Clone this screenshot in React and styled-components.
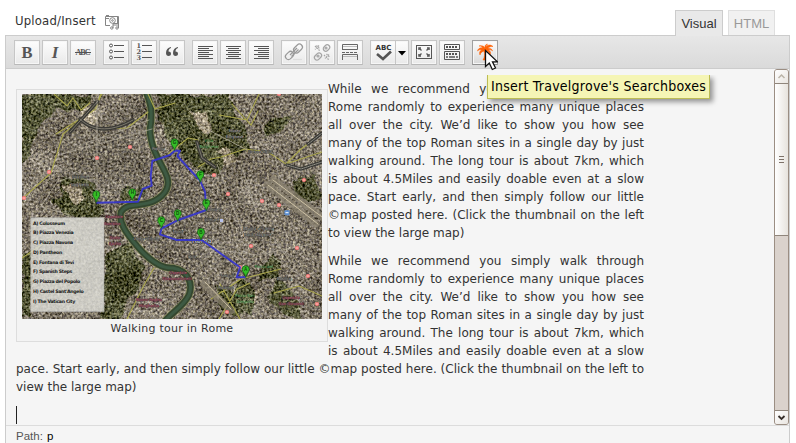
import React from "react";
import styled, { createGlobalStyle } from "styled-components";

const Global = createGlobalStyle`
  * { box-sizing: border-box; }
  html, body { margin: 0; padding: 0; overflow: hidden; background: #fff; }
`;

const Page = styled.main`
  position: relative;
  width: 796px;
  height: 443px;
  overflow: hidden;
  padding: 10px 6px 0 5px;
  display: flex;
  flex-direction: column;
  color: #333;
  font-family: "DejaVu Sans", sans-serif;
`;

const Header = styled.header`
  display: flex;
  height: 25px;
  padding: 0 15px 0 10px;
`;

const UploadLabel = styled.div`
  display: flex;
  flex: 1;
  height: 21px;
  align-items: center;
  gap: 8px;
  font-family: "DejaVu Sans Condensed", "DejaVu Sans", sans-serif;
  font-stretch: condensed;
  font-size: 13px;
  letter-spacing: 0.18px;
`;

const MediaIcon = styled.svg`
  width: 16px;
  height: 16px;
  margin-top: 2px;
`;

const Tab = styled.div`
  z-index: 1;
  width: ${(p) => (p.$active ? 48 : 47)}px;
  height: ${(p) => (p.$active ? 26 : 25)}px;
  margin-left: ${(p) => (p.$active ? 0 : 5)}px;
  border: 1px solid ${(p) => (p.$active ? "#ccc" : "#dfdfdf")};
  border-bottom: 0;
  background: ${(p) => (p.$active ? "#e9e9e9" : "#f1f1f1")};
  color: ${(p) => (p.$active ? "#333" : "#999")};
  font: 13px/25px "Liberation Sans", sans-serif;
  text-align: center;
`;

const Editor = styled.section`
  display: flex;
  flex-direction: column;
  height: 408px;
  border: 1px solid #ccc;
  border-bottom: 0;
  background: #f5f5f5;
`;

const Toolbar = styled.div`
  display: flex;
  gap: 7px;
  height: 33px;
  flex: none;
  padding: 4px 8px;
  border-bottom: 1px solid #ccc;
  background: linear-gradient(#e7e7e7, #dadada);
`;

const Group = styled.div`
  display: flex;
  gap: 2px;
`;

const ToolButton = styled.button`
  display: flex;
  width: ${(p) => p.$width || 26}px;
  height: 25px;
  padding: 0;
  border: 1px solid ${(p) => (p.$hover ? "#a0a0a0" : "#c6c6c6")};
  border-bottom-color: ${(p) => (p.$hover ? "#909090" : "#b9b9b9")};
  background: linear-gradient(#fdfdfd, ${(p) => (p.$hover ? "#d8d8d8" : "#e9e9e9")});
  box-shadow: inset 0 0 0 1px #f6f6f6;
`;

const Glyph = styled.svg`
  width: ${(p) => p.$width || 24}px;
  height: 23px;
  display: block;
  color: #555;
`;

const Workspace = styled.div`
  display: flex;
  height: 356px;
  flex: none;
`;

const Content = styled.article`
  flex: 1;
  padding: 11px 130px 0 10px;
  font-size: 12px;
  line-height: 18px;
  text-align: justify;
`;

const Paragraph = styled.p`
  margin: 0 0 10px;
`;

const Figure = styled.figure`
  float: left;
  width: 312px;
  height: 253px;
  margin: 9px 0 10px;
  padding: 4px 5px 0;
  border: 1px solid #ddd;
  background: #f3f3f3;
`;

const MapArt = styled.svg`
  display: block;
  width: 300px;
  height: 225px;
`;

const Caption = styled.figcaption`
  font-size: 11px;
  line-height: 20px;
  text-align: center;
  letter-spacing: 0.25px;
`;

const Caret = styled.div`
  width: 1px;
  height: 18px;
  background: #222;
`;

const Scrollbar = styled.div`
  display: flex;
  flex-direction: column;
  width: 15px;
  border: 1px solid #9b8e83;
  border-radius: 3px;
  background: #dad2cc;
`;

const ScrollButton = styled.div`
  display: grid;
  place-items: center;
  width: 13px;
  height: ${(p) => (p.$dim ? 13 : 14)}px;
  border-radius: ${(p) => (p.$dim ? "2px 2px 0 0" : "0 0 2px 2px")};
  background: linear-gradient(135deg, #fff, #e9e5e0);
  color: ${(p) => (p.$dim ? "#bbb4a8" : "#38302b")};
  border-top: ${(p) => (p.$dim ? 0 : 1)}px solid #8f857b;
  svg { width: 9px; height: 7px; }
`;

const Thumb = styled.div`
  display: flex;
  flex-direction: column;
  align-items: center;
  justify-content: center;
  gap: 2px;
  height: 153px;
  border: solid #8f857b;
  border-width: 1px 0;
  background: linear-gradient(90deg, #fff, #e7e3dd);
`;

const Grip = styled.i`
  width: 5px;
  height: 1px;
  background: #7d7168;
`;

const TrackSpace = styled.div`
  flex: 1;
`;

const Status = styled.footer`
  flex: 1;
  border-top: 1px solid #dcdcdc;
  padding-left: 10px;
  font: 11.5px/21px "Liberation Sans", sans-serif;
  color: #555;
  b { margin-left: 1px; font-weight: normal; color: #000; }
`;

const Tooltip = styled.div`
  position: absolute;
  left: 487px;
  top: 75px;
  width: 223px;
  height: 24px;
  padding-left: 3px;
  border: 1px solid #bcbc55;
  border-top: 0;
  background: #f5f5b5;
  color: #000;
  box-shadow: 3px 3px 5px rgba(0, 0, 0, 0.4);
  clip-path: inset(0 -10px -10px -10px);
  font: 14px/22px "DejaVu Sans Condensed", "DejaVu Sans", sans-serif;
  font-stretch: condensed;
  letter-spacing: 0.25px;
  white-space: nowrap;
`;

const Pointer = styled.svg`
  position: absolute;
  left: 484px;
  top: 49px;
  width: 14px;
  height: 22px;
`;

const hlines = (rows) =>
  rows.map(([x, w, y]) => <rect key={y} x={x} y={y} width={w} height="1" />);

const alignRows = (kind) =>
  [15, 11, 15, 11, 15, 11, 15].map((w, i) => [
    kind === "left" ? 5 : kind === "right" ? 20 - w : 12.5 - w / 2,
    w,
    5 + i * 2,
  ]);

const icons = {
  bold: <text x="12" y="17" textAnchor="middle" fontFamily="Liberation Serif, serif" fontWeight="700" fontSize="16.5" fill="currentColor">B</text>,
  italic: <text x="12" y="17" textAnchor="middle" fontFamily="Liberation Serif, serif" fontWeight="700" fontStyle="italic" fontSize="17" fill="currentColor">I</text>,
  strike: (
    <g fill="currentColor">
      <text x="12" y="14" textAnchor="middle" fontFamily="Liberation Serif, serif" fontWeight="700" fontSize="8" textLength="15">ABC</text>
      <rect x="4" y="11" width="16" height="1" />
    </g>
  ),
  bullets: (
    <g stroke="currentColor" fill="none">
      {[4.5, 10.5, 16.5].map((y) => (
        <g key={y}><circle cx="7" cy={y} r="1.5" /><path d={`M10 ${y}h10`} /></g>
      ))}
    </g>
  ),
  numbers: (
    <g fill="currentColor" fontFamily="DejaVu Serif, serif" fontWeight="700" fontSize="6.5">
      {[1, 2, 3].map((n, i) => (
        <g key={n}><text x="4.5" y={7 + i * 6}>{n}</text><rect x="10" y={4 + i * 6} width="10" height="1" /></g>
      ))}
    </g>
  ),
  quote: (
    <g fill="currentColor">
      <path d="M11 6C7.800 6.500 6 9 6 12c0 2 1 3 2.500 3S11 14 11 12.700 10 10.500 8.500 10.500c0-2 1-3 2.500-3.500z" />
      <path d="M18 6c-3.200.5-5 3-5 6 0 2 1 3 2.500 3S18 14 18 12.700s-1-2.200-2.500-2.200c0-2 1-3 2.500-3.500z" />
    </g>
  ),
  left: <g fill="currentColor">{hlines(alignRows("left"))}</g>,
  center: <g fill="currentColor">{hlines(alignRows("center"))}</g>,
  right: <g fill="currentColor">{hlines(alignRows("right"))}</g>,
  link: (
    <g fill="none" stroke="#999" strokeWidth="1.2">
      <rect x="3" y="11.500" width="9" height="6" rx="3" transform="rotate(-45 7.500 14.500)" />
      <rect x="11" y="4.500" width="10" height="6" rx="3" transform="rotate(-45 16 7.500)" />
      <path d="m8 14 7-7M9.500 15.500l7-7" strokeWidth="1.300" />
      <path d="M11 18.500h9" stroke="#ddd" />
    </g>
  ),
  unlink: (
    <g fill="none" stroke="#a5a5a5" strokeWidth="1.2">
      <rect x="13" y="4.500" width="7" height="5" rx="2.500" transform="rotate(-45 16.500 7)" />
      <rect x="4" y="13" width="8" height="5" rx="2.500" transform="rotate(-45 8 15.500)" />
      <circle cx="16" cy="7" r="1" /><circle cx="8" cy="15" r="1" />
      <path d="m5 5 5 5M9 4.500l-4 4M6.500 4.500l3 3M14 14l5 5M19 13.500l-4 4M16.500 13l3 3" strokeDasharray="1.500 1" />
    </g>
  ),
  more: (
    <g fill="none" stroke="#666">
      <path d="M4.500 9V3.500h15V8.500h-15M4.500 19v-5.500h15V19" />
      <path d="M5 5.500h14M5 15.500h14" stroke="#bbb" />
      <path d="M4 11.500h16" strokeDasharray="3 1" strokeWidth="1" />
    </g>
  ),
  spell: (
    <g fill="none" stroke="currentColor">
      <text x="4.500" y="9" stroke="none" fill="#333" fontFamily="DejaVu Sans, sans-serif" fontWeight="700" fontSize="7" textLength="16">ABC</text>
      <path d="m6 13 6 5 8-7.500" strokeWidth="2.600" />
      <path d="M24.500 0v23" stroke="#c6c6c6" />
      <path d="M27 10h8l-4 4.500z" fill="#000" stroke="none" />
    </g>
  ),
  fullscreen: (
    <g fill="none" stroke="#555">
      <rect x="4.500" y="4.500" width="15" height="13" />
      <path d="M7 9V7h2M15 7h2v2M17 13v2h-2M9 15H7v-2" strokeWidth="1.500" />
      <path d="m7.500 7.500 2 2M16.500 7.500l-2 2M16.500 14.500l-2-2M7.500 14.500l2-2" strokeWidth="1.300" />
    </g>
  ),
  keyboard: (
    <g fill="none" stroke="#555">
      <path d="M4.500 3.500h15v5h-15zM4.500 10.500h15v8h-15z" />
      <path d="M6 6h12M6 13h12" strokeWidth="2" strokeDasharray="2 1" />
      <path d="M6 16h12" strokeWidth="1.700" strokeDasharray="2 1 6 1" />
    </g>
  ),
  palm: (
    <path fill="#ff6408" stroke="#ff6408" strokeWidth=".5" d="M12 7c-1-2-3-2.800-6-2 3 0 3 1 3.500 2C7 6.200 5 7.800 4.500 10 6 8.500 7 8.500 8.500 9 6.500 10 6 12 7 14c.5-2 2-3.300 4-4 .8 3 .7 6-1 9h4c-1-3-.8-6-.5-9 2 .5 3 2 3.500 4 1.300-2 .5-4-1.500-5 2-.5 3 0 4 1-.3-2-2.400-3-4.500-2.700C16 5.500 18 5.500 20 5.500 17 3 14 4 12.700 6.300c.2-1.300.8-2.300 1.800-3.300C12.500 3.300 11.600 5 12 7z" />
  ),
};

const groups = [
  ["bold", "italic", "strike"],
  ["bullets", "numbers", "quote"],
  ["left", "center", "right"],
  ["link", "unlink", "more"],
  ["spell", "fullscreen", "keyboard"],
  ["palm"],
];

const pins = [
  ["G", 152.500, 48.500], ["I", 74.300, 100.300], ["H", 110.300, 98.500],
  ["F", 178.300, 80.300], ["E", 184.300, 108.700], ["D", 155.700, 119.300],
  ["C", 139.300, 126.300], ["B", 179, 138], ["A", 223.700, 175.300],
];

const stops = [
  "A) Colosseum", "B) Piazza Venezia", "C) Piazza Navona", "D) Pantheon",
  "E) Fontana di Tevi", "F) Spanish Steps", "G) Piazza del Popolo",
  "H) Castel Sant'Angelo", "I) The Vatican City",
];

const stations = [
  [108, 53], [75, 64], [27, 78], [2, 104], [192, 81], [206, 100], [240, 107],
  [257, 111], [282, 86], [229, 152], [275, 154], [286, 182], [295, 210],
  [205, 218], [218, 173], [257, 0],
];

const river =
  "M124-2C128 8 131 16 128 35C128 52 137 66 143 78C150 91 144 101 132 107C120 113 105 108 99 118C96 130 107 142 115 152C127 166 139 175 151 174C167 177 171 190 167 201C161 213 151 217 143 227";

const greens = [
  "M0 0h36l-2 16-12 9-8 12-8 30-8 6z",
  "M35 0h32l-3 18-13-4-8 7-8-6z",
  "M40 85l20-2 12 8-2 14 12 10-8 9-24-2-22-13 10-6z",
  "M103 90l7 5 8-3 3 9-5 9-12-2-6-8z",
  "M150 0h55l8 24 11 7 4 23-17 11-12 14-20-1-17-15-20-24-7-24z",
  "M133 0h28l4 9-14 12-14-10z",
  "M244 28l24-4-6 12-18 5z",
  "M272 87l20-7 8 23-12 9-14-9z",
  "M212 188l12-3 12 16-7 18-17-8z",
  "M240 170l13-11 9 8-8 17-17 4z",
  "M84 160l23-9 17 24-9 22-19 28H79z",
  "M0 162l10-4-2 67H0z",
  "M252 186l21 14 8 25-21-4-13-18z",
  "M194 191l18 10 7 15-8 8-14-14z",
];

function RomeMap() {
  return (
    <MapArt viewBox="0 0 300 225" role="img" aria-label="Map of Rome">
      <defs>
        <filter id="terrain" x="0" y="0" width="100%" height="100%" colorInterpolationFilters="sRGB">
          <feTurbulence type="fractalNoise" baseFrequency="0.06" numOctaves="3" seed="8" result="warp" />
          <feDisplacementMap in="SourceGraphic" in2="warp" scale="13" xChannelSelector="R" yChannelSelector="G" result="land" />
          <feTurbulence type="fractalNoise" baseFrequency="0.42" numOctaves="2" seed="4" />
          <feColorMatrix values="1.6 .5 0 0 -.55  1.550 .55 .02 0 -.56  1.400 .5 .25 0 -.575  0 0 0 0 1" result="grain" />
          <feComposite in="land" in2="grain" operator="arithmetic" k2="1" k3=".62" k4="-.31" result="detail" />
          <feTurbulence type="fractalNoise" baseFrequency="0.035" numOctaves="3" seed="15" />
          <feColorMatrix values=".7 .5 0 0 -.1  .7 .5 0 0 -.1  .7 .5 0 0 -.1  0 0 0 0 1" result="patches" />
          <feComposite in="detail" in2="patches" operator="arithmetic" k2="1" k3=".3" k4="-.15" />
        </filter>
        <pattern id="blocks" width="8" height="7" patternUnits="userSpaceOnUse" patternTransform="rotate(24)">
          <path d="M0 0h8M0 0v7M3 0v3h5" fill="none" stroke="#4a4b44" strokeWidth=".8" />
        </pattern>
        <pattern id="avenues" width="10" height="8" patternUnits="userSpaceOnUse" patternTransform="rotate(-38)">
          <path d="M0 0h10M0 0v8" fill="none" stroke="#aaa399" strokeWidth=".8" />
        </pattern>
      </defs>
      <g filter="url(#terrain)">
        <path d="M-10-10h320v245h-320z" fill="#7b7365" />
        {greens.map((d) => <path key={d} d={d} fill="#4d4f31" />)}
        <path d="M62 10l13 6-2 14-9 5-7-12zM40 91l18-2 7 14-12 8zM166 16l19 3 5 18-11 2zM196 56l12-3 9 13-13 7zM233 195l7 5-8 11z" fill="#a0957f" />
      </g>
      <path fill="url(#blocks)" opacity=".45" d="M32 38l90-30 5 100-88-20zM110 116l30-12 10-26 35 30 30 70-45-5-40-20z" />
      <path fill="url(#avenues)" opacity=".32" d="M190 100l40-90h70v215h-70l-50-70zM0 55l34-30-3 60-31 35z" />
      <g fill="none" strokeLinecap="round">
        <path d={river} stroke="#8f905f" strokeWidth="7.6" />
        <path d={river} stroke="#34462f" strokeWidth="6.500" />
        <path d={river} stroke="#3e5a43" strokeWidth="3" />
        <path d="M34 40l40-25 5-17M0 105l29-26 12-39 32-27 7-13M32 0l13 12 6-8 8 12 9-7M75 35l30-1 21-16M126 0l7 15 20-6M146 60l20-16 10 2M176 73l13-8 10-2 24-8 23 3 18 12 36-12M264 70l14-14 22-17M197 21l28 5 12-26M210 10l19 21 7-14M105 225l17-34 10-17M189 205l30-20 40-10M197 225l18-30 13-6M252 199l25-7 23 10M198 190l20 35M0 164l30-20" stroke="#aaa74c" strokeWidth="1.100" />
        <path d="M58 25c14 14 34 12 53 1M48 38l28-31M175 48l5 16 13 9" stroke="#3b3a36" strokeWidth="3.6" strokeDasharray="6 1" />
        <path d="M58 25c14 14 34 12 53 1M48 38l28-31M175 48l5 16 13 9" stroke="#8c8878" strokeWidth=".8" />
        <path d="M75 0v105M63 49l25-8 39-15M40 60l90-25M20 111l15-23 11-4 28 2M48 121l-31-9M219 70l17 53 33 46M175 30l52 27M224 0l29 60 7 48M185 117l36-8 79 5M195 70l28 75 58 38M180 154l55 7 60-12" stroke="#bbb6a6" strokeWidth="1" opacity=".65" />
        <path d="M245 90l49 40M251 85l49 38M182 190l27 27" stroke="#8b8371" strokeWidth="7" opacity=".75" />
        <path d="M246 91l50 39M251 86l49 37M183 188l26 27" stroke="#ccc0a3" strokeWidth="1" />
        <path d="M265 71l14 4 21-7M286 50l14-11" stroke="#393936" strokeWidth="3.2" />
        <path d="M265 71l14 4 21-7M286 50l14-11" stroke="#bab8a9" strokeWidth=".7" strokeDasharray="1 1" />
      </g>
      <g fontFamily="DejaVu Sans, sans-serif" fontSize="3.700" textAnchor="middle" stroke="#3a3936" strokeWidth=".8" paintOrder="stroke" fill="#aaa9a1">
        <text x="213" y="38">Museo</text><text x="213" y="43.500">Borghese</text>
        <text x="238" y="59">Corso d'Italia</text>
        <text x="58" y="84">Stazione</text><text x="58" y="92">San Pietro</text>
        <text x="236" y="136">Basilica di Santa</text><text x="236" y="141.500">Maria Maggiore</text>
        <text x="157" y="139">Monte</text><text x="193" y="117">Fontana</text>
        <text x="190" y="127">Quirinale</text><text x="205" y="183">Foro di</text>
        <text x="204" y="195">Palatino</text><text x="262" y="186">Basilica</text>
        <text x="170" y="164">Isola</text><text x="136" y="56">Popolo</text>
        <text x="124" y="146">Corso Vittorio</text>
      </g>
      <g fontFamily="DejaVu Sans, sans-serif" fontSize="3.700" textAnchor="middle" stroke="#4b2931" strokeWidth=".7" paintOrder="stroke" fill="#b76e7d">
        <text x="92" y="124">Ospedale</text><text x="90" y="131">Bambino</text>
        <text x="93" y="145">Santo</text><text x="93" y="151">Spirito</text>
        <text x="156" y="180">Ospedale</text><text x="155" y="186">Fatebenefratelli</text>
        <text x="127" y="207">Nuovo Regina</text><text x="127" y="213">Margherita</text>
        <text x="269" y="205">Ospedale</text><text x="269" y="211">San Giovanni</text>
      </g>
      <g fontFamily="DejaVu Sans, sans-serif" fontSize="4" textAnchor="middle" fill="#55aa66">
        <text x="187" y="48">Villa</text><text x="187" y="54">Borghese</text>
        <text x="242" y="174">Parco del</text><text x="223" y="203">Parco San</text><text x="223" y="209">Gregorio</text>
      </g>
      {stations.map(([x, y]) => (
        <g key={`${x}-${y}`}><circle cx={x} cy={y} r="2.1" fill="#f47573" /><path d={`M${x - 1.300} ${y}h2.600`} stroke="#ffe3dc" strokeWidth=".8" /></g>
      ))}
      <rect x="262.500" y="116.200" width="5" height="5" rx="1" fill="#5b8fd2" /><path d="M263.500 118.700h3" stroke="#fff" />
      <path d="M198 125h3v3h-3z" fill="#b9c3ec" />
      <rect x="8.700" y="123.700" width="73.300" height="94" fill="#deded8" fillOpacity=".82" stroke="#aaa" strokeOpacity=".5" />
      <g fontFamily="DejaVu Sans, sans-serif" fontWeight="700" fontSize="4.700" fill="#1a1a1a" letterSpacing="-.35">
        {stops.map((s, i) => <text key={s} x="11" y={130.500 + i * 9.750}>{s}</text>)}
      </g>
      <text x="170" y="149" fontSize="7" fontFamily="DejaVu Sans, sans-serif" fill="#ddd" stroke="#333" strokeWidth="1" paintOrder="stroke">Roma</text>
      <path d="M74.300 108.700L116 107.700L120.700 95L129.700 91.700L128.700 82.700L130.300 67L148 61L152.700 56.700H158L155.300 62L178 86.700L183 97.700L184.300 116L156.300 126L139.700 134.300L138 140.300L154.700 146H179.700L218 173.300L214.700 183.300H223.700" fill="none" stroke="#3434cc" strokeOpacity=".92" strokeWidth="1.900" strokeLinejoin="round" />
      {pins.map(([letter, x, y]) => (
        <g key={letter} transform={`translate(${x} ${y})`}>
          <path d="M0 8C-.7 4-3.500 3-3.500 0A3.500 3.500 0 1 1 3.500 0C3.500 3 .7 4 0 8Z" fill="#35bd26" stroke="#176815" strokeWidth=".8" />
          <text y="1.700" textAnchor="middle" fontSize="4.600" fontFamily="Liberation Sans, sans-serif" fontWeight="700" fill="#104810">{letter}</text>
        </g>
      ))}
    </MapArt>
  );
}

const tour = "While we recommend you simply walk through Rome randomly to experience many unique places all over the city. We’d like to show you how see many of the top Roman sites in a single day by just walking around. The long tour is about 7km, which is about 4.5Miles and easily doable even at a slow pace. Start early, and then simply follow our little ©map posted here. (Click the thumbnail on the left to view the large map)";

export default function App() {
  return (
    <>
      <Global />
      <Page>
        <Header>
          <UploadLabel>
            <span>Upload/Insert</span>
            <MediaIcon viewBox="0 0 16 16" fill="none" stroke="#858585">
              <path d="M6 11.500H1.500v-9h12v7.500M2 1.500h3M2 4.500h3" />
              <circle cx="8.500" cy="6.500" r="2.800" /><circle cx="8.500" cy="6.500" r=".8" />
              <path d="M12 2.500h2.500v8M9 14v-4.500h5.500V14M9 11h5" />
              <circle cx="7.800" cy="14" r="1.200" /><circle cx="13" cy="14" r="1.200" />
            </MediaIcon>
          </UploadLabel>
          <Tab $active>Visual</Tab>
          <Tab>HTML</Tab>
        </Header>
        <Editor>
          <Toolbar>
            {groups.map((names) => (
              <Group key={names[0]}>
                {names.map((name) => {
                  const width = name === "spell" ? 39 : 26;
                  return (
                    <ToolButton key={name} $width={width} $hover={name === "palm"} aria-label={name}>
                      <Glyph $width={width - 2} viewBox={`0 0 ${width - 2} 23`}>{icons[name]}</Glyph>
                    </ToolButton>
                  );
                })}
              </Group>
            ))}
          </Toolbar>
          <Workspace>
            <Content>
              <Figure><RomeMap /><Caption>Walking tour in Rome</Caption></Figure>
              <Paragraph>{tour}</Paragraph>
              <Paragraph>{tour}</Paragraph>
              <Caret />
            </Content>
            <Scrollbar>
              <ScrollButton $dim><svg viewBox="0 0 9 7"><path d="m1.500 5 3-3 3 3" fill="none" stroke="currentColor" strokeWidth="1.500" /></svg></ScrollButton>
              <Thumb><Grip /><Grip /><Grip /></Thumb>
              <TrackSpace />
              <ScrollButton><svg viewBox="0 0 9 7"><path d="m1.500 2 3 3 3-3" fill="none" stroke="currentColor" strokeWidth="1.800" /></svg></ScrollButton>
            </Scrollbar>
          </Workspace>
          <Status>Path: <b>p</b></Status>
        </Editor>
        <Tooltip>Insert Travelgrove's Searchboxes</Tooltip>
        <Pointer viewBox="0 0 14 22">
          <path d="M1.500 1.500v16l3.800-3.500 3 6.500 3.200-1.500-3-6.200h5z" fill="#fff" stroke="#111" strokeWidth="1.300" />
        </Pointer>
      </Page>
    </>
  );
}
